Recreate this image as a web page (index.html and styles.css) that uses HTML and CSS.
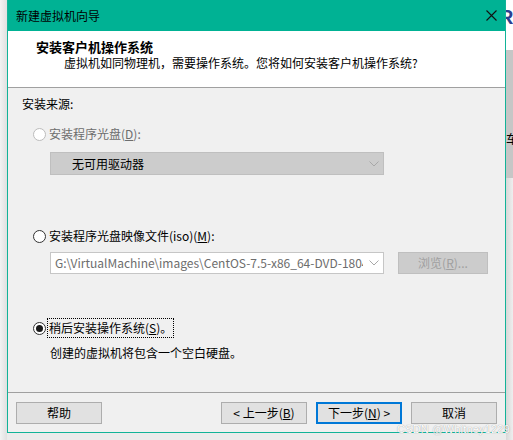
FILE: index.html
```html
<!DOCTYPE html>
<html lang="zh-CN">
<head>
    <meta charset="UTF-8">
    <title>新建虚拟机向导</title>
    <link rel="stylesheet" href="styles.css">
</head>
<body>
    <div class="screen">
        <div class="shadow-left"></div>

        <div class="dialog">
            <div class="titlebar">
                <span class="title">新建虚拟机向导</span>
                <svg class="close" width="11" height="11" viewBox="0 0 11 11">
                    <path d="M0.5 0.5 L10.5 10.5 M10.5 0.5 L0.5 10.5" stroke="#111" stroke-width="1.1" fill="none"/>
                </svg>
            </div>

            <div class="header">
                <div class="header-title">安装客户机操作系统</div>
                <div class="header-sub">虚拟机如同物理机，需要操作系统。您将如何安装客户机操作系统?</div>
            </div>

            <div class="content">
                <div class="group-label">安装来源:</div>
                <div class="options">
                    <div class="radio disabled">
                        <span class="circle"></span>
                        <span class="label">安装程序光盘(<u>D</u>):</span>
                    </div>
                    <div class="select select-drive">
                        <span class="select-text">无可用驱动器</span>
                        <svg class="chevron" width="10" height="6" viewBox="0 0 10 6"><path d="M0.5 0.5 L5 5 L9.5 0.5" stroke="#a8a8a8" fill="none"/></svg>
                    </div>

                    <div class="radio radio-iso">
                        <span class="circle"></span>
                        <span class="label">安装程序光盘映像文件(iso)(<u>M</u>):</span>
                    </div>
                    <div class="iso-row">
                        <div class="select select-iso">
                            <span class="select-text">G:\VirtualMachine\images\CentOS-7.5-x86_64-DVD-1804.iso</span>
                            <svg class="chevron" width="10" height="6" viewBox="0 0 10 6"><path d="M0.5 0.5 L5 5 L9.5 0.5" stroke="#a8a8a8" fill="none"/></svg>
                        </div>
                        <div class="browse">浏览(<u>R</u>)...</div>
                    </div>

                    <div class="radio radio-later">
                        <span class="circle checked"></span>
                        <span class="label focus">稍后安装操作系统(<u>S</u>)。</span>
                    </div>
                    <div class="note">创建的虚拟机将包含一个空白硬盘。</div>
                </div>
            </div>

            <div class="footer">
                <button class="btn">帮助</button>
                <button class="btn btn-back">&lt; 上一步(<u>B</u>)</button>
                <button class="btn btn-primary">下一步(<u>N</u>) &gt;</button>
                <button class="btn">取消</button>
            </div>
        </div>

        <div class="backdrop">
            <div class="bd-top"><span class="bd-glyph">R</span></div>
            <div class="bd-mid"><span class="bd-char">车</span></div>
            <div class="bd-bottom"></div>
        </div>

        <div class="watermark">CSDN @Whitney1229</div>
    </div>
</body>
</html>
```

FILE: styles.css
```css
body {
    margin: 0;
    font-family: "Noto Sans CJK SC", "Noto Sans", sans-serif;
    font-size: 12px;
    color: #000;
}
.screen {
    position: relative;
    display: flex;
    width: 513px;
    height: 440px;
    overflow: hidden;
    background: #ebebeb;
}
.shadow-left {
    width: 7px;
    background: linear-gradient(to right, #f3f3f3, #e0e0e0);
}
.dialog {
    align-self: flex-start;
    width: 499px;
    height: 433px;
    box-sizing: border-box;
    border: 1px solid #12b398;
    border-top: none;
    background: #f0f0f0;
    display: flex;
    flex-direction: column;
}
.titlebar {
    height: 31px;
    flex: none;
    background: #00b294;
    display: flex;
    align-items: center;
    justify-content: space-between;
    padding: 0 8px 0 8px;
}
.title {
    line-height: 16px;
}
.close {
    display: block;
}
.header {
    height: 57px;
    flex: none;
    box-sizing: border-box;
    background: #fff;
    border-bottom: 1px solid #a0a0a0;
    padding-top: 8px;
    line-height: 16px;
}
.header-title {
    padding-left: 28px;
    font-size: 13px;
    font-weight: bold;
}
.header-sub {
    padding-left: 56px;
}
.content {
    flex: 1;
    padding: 8px 0 0 14px;
    line-height: 16px;
}
.options {
    padding-left: 11px;
}
.radio {
    display: flex;
    align-items: center;
    height: 16px;
    margin-top: 14px;
}
.circle {
    width: 13px;
    height: 13px;
    box-sizing: border-box;
    border: 1px solid #333;
    border-radius: 50%;
    background: #fff;
    margin-right: 3px;
    display: flex;
    align-items: center;
    justify-content: center;
}
.circle.checked::after {
    content: "";
    width: 7px;
    height: 7px;
    border-radius: 50%;
    background: #1a1a1a;
}
.radio.disabled .circle {
    border-color: #bcbcbc;
}
.radio.disabled .label {
    color: #6d6d6d;
}
.label.focus {
    outline: 1px dotted #000;
    outline-offset: 1px;
}
.select {
    width: 334px;
    box-sizing: border-box;
    border: 1px solid #bfbfbf;
    display: flex;
    align-items: center;
    justify-content: space-between;
    overflow: hidden;
}
.select-text {
    white-space: nowrap;
    overflow: hidden;
}
.chevron {
    flex: none;
    margin: 0 4px 0 6px;
}
.select-drive {
    height: 23px;
    margin: 10px 0 0 17px;
    background: #cccccc;
    padding-left: 21px;
}
.radio-iso {
    margin-top: 53px;
}
.iso-row {
    display: flex;
    align-items: center;
    margin: 8px 0 0 17px;
}
.select-iso {
    height: 22px;
    background: #fff;
    border-color: #c6c6c6;
    padding-left: 4px;
}
.select-iso .select-text {
    color: #6d6d6d;
    width: 310px;
}
.browse {
    width: 90px;
    height: 22px;
    box-sizing: border-box;
    margin-left: 14px;
    border: 1px solid #bfbfbf;
    background: #cccccc;
    color: #a0a0a0;
    text-align: center;
    line-height: 20px;
}
.radio-later {
    margin-top: 46px;
}
.note {
    margin: 9px 0 0 17px;
}
.footer {
    height: 40px;
    flex: none;
    box-sizing: border-box;
    border-top: 1px solid #a0a0a0;
    padding: 9px 8px 0 8px;
    display: flex;
    align-items: flex-start;
    gap: 9px;
}
.btn {
    width: 86px;
    height: 22px;
    box-sizing: border-box;
    padding: 0;
    border: 1px solid #adadad;
    background: #e1e1e1;
    font: inherit;
    color: #000;
    line-height: 18px;
    text-align: center;
}
.btn-back {
    margin-left: auto;
}
.btn-primary {
    border: 2px solid #0078d7;
}
.backdrop {
    flex: 1;
    display: flex;
    flex-direction: column;
    overflow: hidden;
}
.bd-top {
    height: 50px;
    background: #fff;
    overflow: hidden;
}
.bd-glyph {
    display: block;
    margin: 6px 0 0 -7px;
    font-family: "Liberation Sans", sans-serif;
    font-size: 20px;
    font-weight: bold;
    color: #2d3f8f;
    line-height: 22px;
}
.bd-mid {
    height: 128px;
    background: #c6c6c6;
    overflow: hidden;
}
.bd-char {
    display: block;
    margin-top: 82px;
    line-height: 14px;
    white-space: nowrap;
}
.bd-bottom {
    flex: 1;
    background: linear-gradient(to right, #d8d8d8, #eeeeee);
}
.watermark {
    position: absolute;
    right: 3px;
    bottom: 5px;
    font-family: "Liberation Sans", sans-serif;
    font-size: 11px;
    color: #fff;
    text-shadow: 0 0 1px rgba(0, 0, 0, 0.45);
    letter-spacing: 0.2px;
}
```
